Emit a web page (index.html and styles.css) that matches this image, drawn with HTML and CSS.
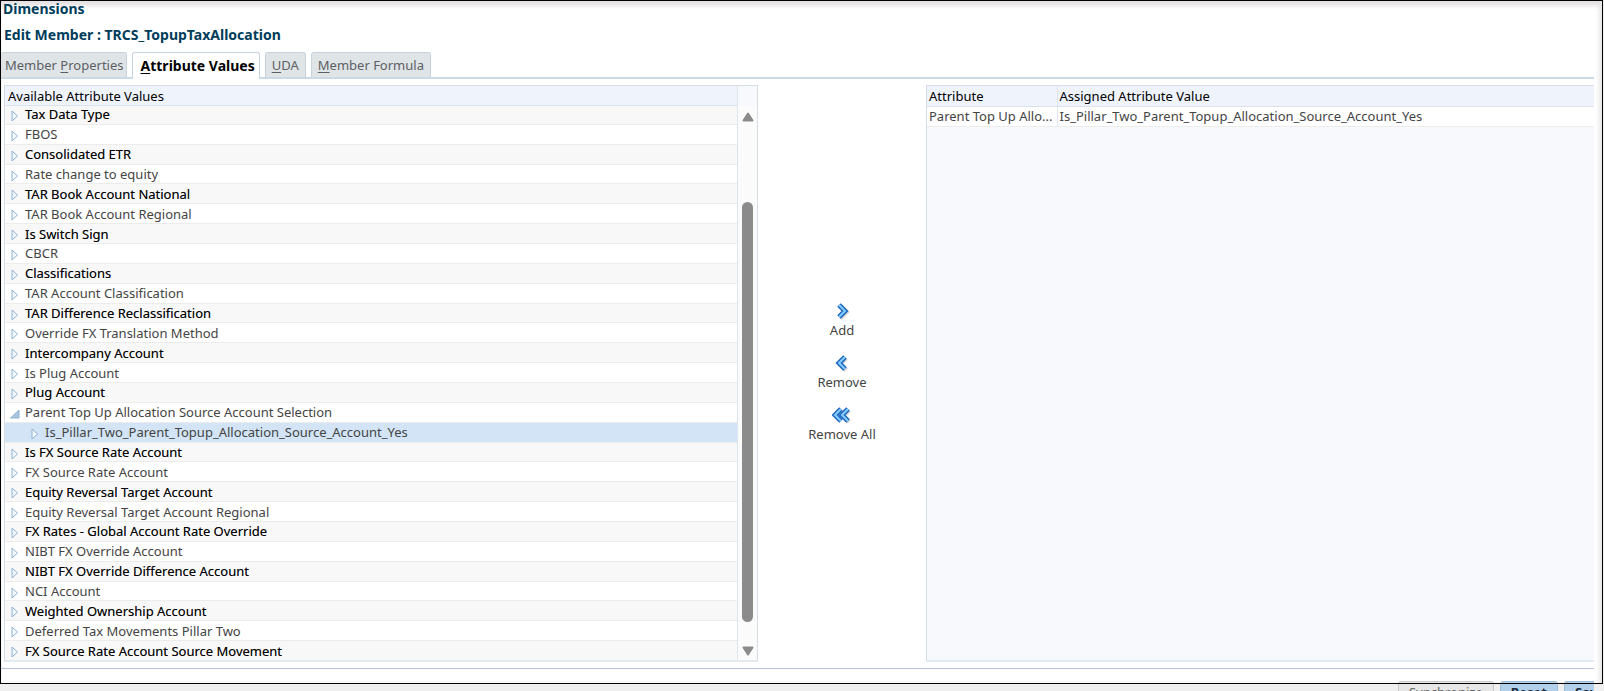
FILE: index.html
```html
<!DOCTYPE html>
<html lang="en">
<head>
    <meta charset="UTF-8">
    <meta name="viewport" content="width=device-width, initial-scale=1.0">
    <title>Dimensions - Edit Member</title>
    <link rel="stylesheet" href="styles.css">
</head>
<body>
    <div class="page">
        <main class="frame">
            <h1 class="title">Dimensions</h1>
            <h2 class="title subtitle">Edit Member : TRCS_TopupTaxAllocation</h2>

            <div class="tabs" role="tablist">
                <button class="tab" role="tab">Member <u>P</u>roperties</button>
                <button class="tab active" role="tab" aria-selected="true"><u>A</u>ttribute Values</button>
                <button class="tab" role="tab"><u>U</u>DA</button>
                <button class="tab" role="tab"><u>M</u>ember Formula</button>
            </div>

            <div class="shuttle">
                <section class="available">
                    <div class="tree-panel">
                        <h3 class="panel-header">Available Attribute Values</h3>
                        <div class="tree-view">
                            <ul class="tree" id="tree" role="tree"></ul>
                        </div>
                    </div>
                    <div class="scrollbar">
                        <svg class="arrow" viewBox="0 0 12 10"><path d="M6 1.5 10.5 8.5H1.5Z"/></svg>
                        <div class="track"><div class="thumb"></div></div>
                        <svg class="arrow" viewBox="0 0 12 10"><path d="M6 8.5 10.5 1.5H1.5Z"/></svg>
                    </div>
                </section>

                <div class="actions">
                    <button class="action">
                        <svg width="20" height="20" viewBox="0 0 20 20">
                            <path class="shade" d="M8 5l6 6-6 6"/>
                            <path class="edge" d="M7 4l6 6-6 6"/>
                            <path class="fill" d="M7 4l6 6-6 6"/>
                        </svg>
                        Add
                    </button>
                    <button class="action">
                        <svg width="20" height="20" viewBox="0 0 20 20">
                            <path class="shade" d="M14 5l-6 6 6 6"/>
                            <path class="edge" d="M13 4l-6 6 6 6"/>
                            <path class="fill" d="M13 4l-6 6 6 6"/>
                        </svg>
                        Remove
                    </button>
                    <button class="action">
                        <svg width="20" height="20" viewBox="0 0 20 20">
                            <path class="shade" d="M17 5l-6 6 6 6"/>
                            <path class="edge" d="M9 4l-6 6 6 6"/>
                            <path class="fill" d="M9 4l-6 6 6 6"/>
                            <path class="edge" d="M16 4l-6 6 6 6"/>
                            <path class="fill" d="M16 4l-6 6 6 6"/>
                        </svg>
                        Remove All
                    </button>
                </div>

                <section class="assigned">
                    <table class="assigned-table">
                        <thead>
                            <tr><th class="col-attribute">Attribute</th><th>Assigned Attribute Value</th></tr>
                        </thead>
                        <tbody>
                            <tr><td>Parent Top Up Allo...</td><td>Is_Pillar_Two_Parent_Topup_Allocation_Source_Account_Yes</td></tr>
                        </tbody>
                    </table>
                </section>
            </div>
        </main>

        <footer class="footer">
            <button class="btn" disabled>Synchronize</button>
            <button class="btn primary">Reset</button>
            <button class="btn primary last">Save</button>
        </footer>
    </div>
    <script>
        const attributes = [
            'Tax Data Type', 'FBOS', 'Consolidated ETR', 'Rate change to equity',
            'TAR Book Account National', 'TAR Book Account Regional', 'Is Switch Sign', 'CBCR',
            'Classifications', 'TAR Account Classification', 'TAR Difference Reclassification',
            'Override FX Translation Method', 'Intercompany Account', 'Is Plug Account', 'Plug Account',
            'Parent Top Up Allocation Source Account Selection',
            'Is FX Source Rate Account', 'FX Source Rate Account', 'Equity Reversal Target Account',
            'Equity Reversal Target Account Regional', 'FX Rates - Global Account Rate Override',
            'NIBT FX Override Account', 'NIBT FX Override Difference Account', 'NCI Account',
            'Weighted Ownership Account', 'Deferred Tax Movements Pillar Two',
            'FX Source Rate Account Source Movement'
        ];
        const children = {
            'Parent Top Up Allocation Source Account Selection': 'Is_Pillar_Two_Parent_Topup_Allocation_Source_Account_Yes'
        };

        const closedIcon = '<svg width="8" height="12" viewBox="0 0 8 12"><path class="closed" d="M1 1 6.5 6 1 11Z"/></svg>';
        const openIcon = '<svg width="10" height="12" viewBox="0 0 10 12"><path class="opened" d="M9 2V10H0.5Z"/></svg>';

        function renderNode(name, className, icon) {
            return `
                <li class="node ${className}" role="treeitem">
                    <button class="toggle" aria-label="Toggle ${name}">${icon}</button>
                    <span>${name}</span>
                </li>
            `;
        }

        // Banding follows the top level only, the expanded child does not count
        document.getElementById('tree').innerHTML = attributes.map((name, i) => {
            const child = children[name];
            const row = renderNode(name, i % 2 === 0 ? 'odd' : '', child ? openIcon : closedIcon);
            return child ? row + renderNode(child, 'selected', closedIcon) : row;
        }).join('');
    </script>
</body>
</html>
```
FILE: styles.css
```css
* {
    box-sizing: border-box;
}
body {
    margin: 0;
    font-family: Tahoma, "Noto Sans", sans-serif;
    font-size: 13px;
    color: #444;
    background: #fff;
}
button {
    font: inherit;
    color: inherit;
    padding: 0;
    border: none;
    background: none;
    cursor: pointer;
}
.page {
    position: relative;
    display: flex;
    flex-direction: column;
    height: 100vh;
    overflow: hidden;
    background: #efefef;
}
/* black outline runs over the footer buttons */
.page::after {
    content: "";
    position: absolute;
    inset: 0 1px 7px 0;
    border: 1px solid #000;
    pointer-events: none;
}
.frame {
    flex: 1;
    display: flex;
    flex-direction: column;
    min-height: 0;
    margin-right: 1px;
    padding-bottom: 14px;
    border: 1px solid transparent;
    background: #fff;
    box-shadow: inset 0 6px 4px -1px #e6e2e4, inset -4px 0 4px -1px #e8e8e8;
}
.title {
    margin: 0;
    padding-left: 2px;
    font-size: 14px;
    line-height: 16px;
    color: #003d5b;
}
.subtitle {
    padding: 10px 3px 9px;
}
.tabs {
    display: flex;
    gap: 5px;
    margin-right: 8px;
    border-bottom: 2px solid #cbd9e4;
}
.tab {
    height: 25px;
    padding: 0 6px;
    border: 1px solid #c6d3df;
    border-bottom: none;
    border-radius: 3px 3px 0 0;
    background: #dfe4e7;
    color: #5d6063;
}
.tab:first-child {
    padding: 0 2px 0 4px;
    border-left: none;
}
.tab.active {
    height: 27px;
    margin-bottom: -2px;
    padding: 0 4px 2px 8px;
    background: #fff;
    color: #000;
    font-size: 14px;
    font-weight: bold;
}
.tab u {
    text-underline-offset: 2px;
}
.shuttle {
    flex: 1;
    display: grid;
    grid-template-columns: 754fr 168fr 668fr;
    min-height: 0;
    margin: 6px 8px 0 0;
    padding: 0 0 6px 3px;
    border-bottom: 1px solid #b4c4dd;
}
.available {
    display: flex;
    min-height: 0;
    border: 1px solid #d5dee6;
    border-bottom: 2px solid #e2e9ef;
}
.tree-panel {
    flex: 1;
    display: flex;
    flex-direction: column;
    min-width: 0;
    border-right: 1px solid #dce5ec;
}
.panel-header {
    margin: 0;
    padding-left: 3px;
    height: 20px;
    border-bottom: 1px solid #d9e2ea;
    background: #eff3fb;
    color: #000;
    font-size: 13px;
    font-weight: normal;
    line-height: 20px;
}
.tree-view {
    flex: 1;
    display: flex;
    min-height: 0;
    overflow: hidden;
}
.tree {
    flex: 1;
    display: flex;
    flex-direction: column;
    margin: -1px 0;
    padding: 0;
    list-style: none;
}
.node {
    flex: 1;
    display: flex;
    align-items: center;
    gap: 3px;
    min-height: 0;
    padding-left: 3px;
    border-bottom: 1px solid #ececec;
    line-height: 18px;
    white-space: nowrap;
}
.node.odd {
    background: #f8f8f8;
    color: #000;
    text-shadow: 0 0 0 rgba(0, 0, 0, 0.4);
}
.node.selected {
    padding-left: 23px;
    background: #d2e4f5;
}
.toggle {
    display: flex;
    justify-content: center;
    width: 14px;
    padding-top: 3px;
}
.closed {
    fill: #f4f9fd;
    stroke: #8eb2d6;
}
.opened {
    fill: #a9c6e0;
    stroke: #8fb1d0;
}
.scrollbar {
    display: flex;
    flex-direction: column;
    align-items: center;
    width: 19px;
    padding: 26px 0 4px;
    background: linear-gradient(#f7f9fd 20px, #fbfbfb 20px);
}
.arrow {
    width: 12px;
    height: 10px;
    fill: #8b8b8b;
    stroke: #8b8b8b;
    stroke-width: 2;
    stroke-linejoin: round;
}
.track {
    flex: 1;
    display: flex;
    flex-direction: column;
    justify-content: flex-end;
    padding-bottom: 24px;
}
.thumb {
    width: 11px;
    height: 84%;
    border-radius: 6px;
    background: #8b8b8b;
}
.actions {
    display: flex;
    flex-direction: column;
    align-items: center;
    justify-content: center;
    gap: 14px;
    padding-bottom: 4px;
}
.action {
    display: flex;
    flex-direction: column;
    align-items: center;
    line-height: 18px;
}
.action path {
    fill: none;
}
.action .shade {
    stroke: #d2d2d2;
    stroke-width: 5;
}
.action .edge {
    stroke: #1f68c0;
    stroke-width: 5;
}
.action .fill {
    stroke: #86cbff;
    stroke-width: 2;
}
.assigned {
    border: 1px solid #d5dee6;
    border-right: none;
    border-bottom: 2px solid #e2e9ef;
    background: #f7f9fd;
}
.assigned-table {
    width: 100%;
    table-layout: fixed;
    border-collapse: collapse;
}
.col-attribute {
    width: 130px;
}
.assigned-table th,
.assigned-table td {
    height: 20px;
    padding: 0 2px;
    overflow: hidden;
    border-bottom: 1px solid #d9e2ea;
    line-height: 18px;
    text-align: left;
    text-overflow: ellipsis;
    white-space: nowrap;
}
.assigned-table th {
    background: #eff3fb;
    color: #000;
    font-weight: normal;
}
.assigned-table td {
    border-color: #ececec;
    background: #fff;
}
.assigned-table th:first-child,
.assigned-table td:first-child {
    border-right: 1px solid #e0e6ec;
}
.footer {
    display: flex;
    justify-content: flex-end;
    gap: 6px;
    height: 7px;
    margin-right: 10px;
}
.btn {
    height: 22px;
    margin-top: -3px;
    padding: 0 10px;
    border: 1px solid #c9c9c9;
    border-radius: 3px;
    background: #e6e6e6;
    color: #666;
    line-height: 18px;
}
.btn.primary {
    border-color: #9fbcd8;
    background: #b3d0ea;
    color: #1c2b3a;
    font-weight: bold;
}
.btn.last {
    width: 30px;
    overflow: hidden;
    border-right: none;
    border-radius: 3px 0 0 0;
}
```
